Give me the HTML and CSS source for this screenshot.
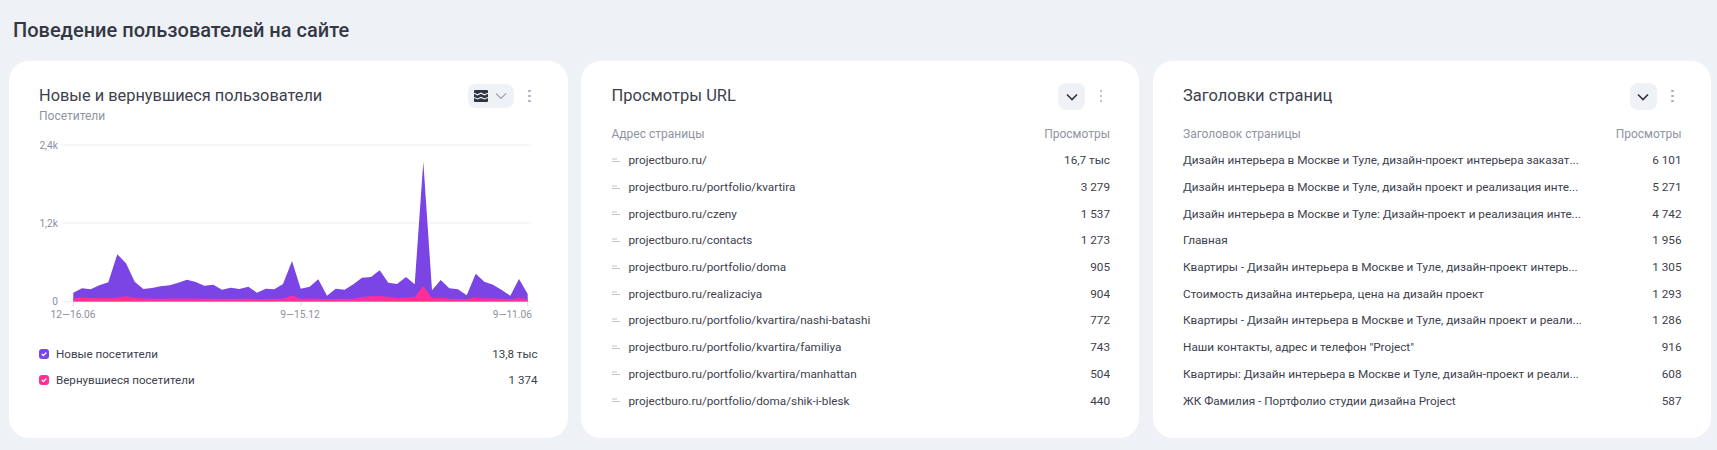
FILE: index.html
```html
<!DOCTYPE html>
<html lang="ru">
<head>
<meta charset="utf-8">
<title>Поведение пользователей на сайте</title>
<link rel="stylesheet" href="styles.css">
</head>
<body>
<h1 class="page-title">Поведение пользователей на сайте</h1>
<div class="cards">
  <section class="card card-chart">
    <header class="card-head">
      <div class="head-text">
        <h2 class="card-title card-title-long">Новые и вернувшиеся пользователи</h2>
        <div class="card-sub">Посетители</div>
      </div>
      <div class="pill">
        <svg class="stack-ico" viewBox="0 0 14 12"><rect width="14" height="12" rx="1"/><path d="M0 3.200l3.500 1.600 3.500-1.600 3.500 1.600 3.500-1.600M0 7.400l3.500 1.600 3.500-1.600 3.500 1.600 3.500-1.600"/></svg>
        <svg class="chev chev-muted" viewBox="0 0 12 8"><path d="M1 1.500l5 5 5-5"/></svg>
      </div>
      <div class="kebab"><i></i><i></i><i></i></div>
    </header>
    <svg class="chart" viewBox="38 130 510 190">
      <line class="grid" x1="62" y1="145" x2="532" y2="145"/>
      <line class="grid" x1="62" y1="223" x2="532" y2="223"/>
      <line class="grid" x1="62" y1="301.500" x2="532" y2="301.500"/>
      <text class="axis" x="58" y="149" text-anchor="end">2,4k</text>
      <text class="axis" x="58" y="227" text-anchor="end">1,2k</text>
      <text class="axis" x="58" y="305" text-anchor="end">0</text>
      <polygon class="area-new" points="73.300,301.500 73.300,292.700 82,288.300 90.700,289.300 99.300,285.300 108.300,282.300 117.300,254.300 126,263.300 134.700,281.700 143.300,289 152,288 160.700,286.300 169.700,285.300 178.300,282.700 187,279.700 195.700,282 204.300,285.700 213.300,284.700 222,289.700 230.700,287.700 239.300,289 248.300,286.700 257,292.700 265.700,288.700 274.300,289.300 283,284 292,261 300.700,288.700 309.700,286.700 318.300,279.300 327,295.700 335.700,288.700 344.700,289.700 353.300,284.300 362,277.700 371,277 379.700,270.300 388.300,282.700 397,284 406,277 414.700,284.300 423.300,161.700 432,290.300 440.700,280 449.300,288.300 458,289.300 466.700,295.300 475.700,273.700 484.300,281.700 493,284.700 501.700,290 510.300,295.700 519,279 527.700,294 527.700,301.500"/>
      <polygon class="area-back" points="73.300,301.200 73.300,298 82,297.400 90.700,298 99.300,298.200 108.300,298.200 117.300,297.400 126,296.200 134.700,298 143.300,298.400 152,298.400 160.700,299 169.700,298.400 178.300,298.400 187,298.400 195.700,298.400 204.300,298.700 213.300,298.700 222,299 230.700,298.700 239.300,299 248.300,298.400 257,299.200 265.700,299 274.300,299 283,298.400 292,295.500 300.700,298.700 309.700,298.400 318.300,298.700 327,299.200 335.700,299 344.700,298.700 353.300,298.700 362,297 371,296.300 379.700,296 388.300,296.800 397,298 406,297.500 414.700,297 423.300,286 432,298.200 440.700,298 449.300,298.700 458,299 466.700,299 475.700,297.600 484.300,298.400 493,298.400 501.700,298.700 510.300,299.200 519,298 527.700,299 527.700,301.200"/>
      <line class="tick" x1="73.300" y1="302" x2="73.300" y2="306"/>
      <line class="tick" x1="301" y1="302" x2="301" y2="306"/>
      <line class="tick" x1="527.700" y1="302" x2="527.700" y2="306"/>
      <text class="axis" x="73" y="318" text-anchor="middle">12—16.06</text>
      <text class="axis" x="300" y="318" text-anchor="middle">9—15.12</text>
      <text class="axis" x="532" y="318" text-anchor="end">9—11.06</text>
    </svg>
    <ul class="legend">
      <li class="legend-row">
        <svg class="check check-new" viewBox="0 0 10 10"><rect width="10" height="10" rx="3"/><path d="M2.800 5l1.600 1.700 2.900-3.200"/></svg>
        <span class="legend-name">Новые посетители</span>
        <span class="legend-val">13,8 тыс</span>
      </li>
      <li class="legend-row">
        <svg class="check check-back" viewBox="0 0 10 10"><rect width="10" height="10" rx="3"/><path d="M2.800 5l1.600 1.700 2.900-3.200"/></svg>
        <span class="legend-name">Вернувшиеся посетители</span>
        <span class="legend-val">1 374</span>
      </li>
    </ul>
  </section>

  <section class="card">
    <header class="card-head">
      <div class="head-text"><h2 class="card-title">Просмотры URL</h2></div>
      <div class="square"><svg class="chev" viewBox="0 0 12 8"><path d="M1 1.500l5 5 5-5"/></svg></div>
      <div class="kebab"><i></i><i></i><i></i></div>
    </header>
    <div class="table-head"><span>Адрес страницы</span><span>Просмотры</span></div>
    <ul class="rows">
      <li class="row"><svg class="link" viewBox="0 0 10 5"><path d="M0 1h5M0 3.500h8"/></svg><span class="cell-name">projectburo.ru/</span><span class="cell-val">16,7 тыс</span></li>
      <li class="row"><svg class="link" viewBox="0 0 10 5"><path d="M0 1h5M0 3.500h8"/></svg><span class="cell-name">projectburo.ru/portfolio/kvartira</span><span class="cell-val">3 279</span></li>
      <li class="row"><svg class="link" viewBox="0 0 10 5"><path d="M0 1h5M0 3.500h8"/></svg><span class="cell-name">projectburo.ru/czeny</span><span class="cell-val">1 537</span></li>
      <li class="row"><svg class="link" viewBox="0 0 10 5"><path d="M0 1h5M0 3.500h8"/></svg><span class="cell-name">projectburo.ru/contacts</span><span class="cell-val">1 273</span></li>
      <li class="row"><svg class="link" viewBox="0 0 10 5"><path d="M0 1h5M0 3.500h8"/></svg><span class="cell-name">projectburo.ru/portfolio/doma</span><span class="cell-val">905</span></li>
      <li class="row"><svg class="link" viewBox="0 0 10 5"><path d="M0 1h5M0 3.500h8"/></svg><span class="cell-name">projectburo.ru/realizaciya</span><span class="cell-val">904</span></li>
      <li class="row"><svg class="link" viewBox="0 0 10 5"><path d="M0 1h5M0 3.500h8"/></svg><span class="cell-name">projectburo.ru/portfolio/kvartira/nashi-batashi</span><span class="cell-val">772</span></li>
      <li class="row"><svg class="link" viewBox="0 0 10 5"><path d="M0 1h5M0 3.500h8"/></svg><span class="cell-name">projectburo.ru/portfolio/kvartira/familiya</span><span class="cell-val">743</span></li>
      <li class="row"><svg class="link" viewBox="0 0 10 5"><path d="M0 1h5M0 3.500h8"/></svg><span class="cell-name">projectburo.ru/portfolio/kvartira/manhattan</span><span class="cell-val">504</span></li>
      <li class="row"><svg class="link" viewBox="0 0 10 5"><path d="M0 1h5M0 3.500h8"/></svg><span class="cell-name">projectburo.ru/portfolio/doma/shik-i-blesk</span><span class="cell-val">440</span></li>
    </ul>
  </section>

  <section class="card">
    <header class="card-head">
      <div class="head-text"><h2 class="card-title">Заголовки страниц</h2></div>
      <div class="square"><svg class="chev" viewBox="0 0 12 8"><path d="M1 1.500l5 5 5-5"/></svg></div>
      <div class="kebab"><i></i><i></i><i></i></div>
    </header>
    <div class="table-head"><span>Заголовок страницы</span><span>Просмотры</span></div>
    <ul class="rows">
      <li class="row"><span class="cell-title">Дизайн интерьера в Москве и Туле, дизайн-проект интерьера заказат...</span><span class="cell-val">6 101</span></li>
      <li class="row"><span class="cell-title">Дизайн интерьера в Москве и Туле, дизайн проект и реализация инте...</span><span class="cell-val">5 271</span></li>
      <li class="row"><span class="cell-title">Дизайн интерьера в Москве и Туле: Дизайн-проект и реализация инте...</span><span class="cell-val">4 742</span></li>
      <li class="row"><span class="cell-title">Главная</span><span class="cell-val">1 956</span></li>
      <li class="row"><span class="cell-title">Квартиры - Дизайн интерьера в Москве и Туле, дизайн-проект интерь...</span><span class="cell-val">1 305</span></li>
      <li class="row"><span class="cell-title">Стоимость дизайна интерьера, цена на дизайн проект</span><span class="cell-val">1 293</span></li>
      <li class="row"><span class="cell-title">Квартиры - Дизайн интерьера в Москве и Туле, дизайн проект и реали...</span><span class="cell-val">1 286</span></li>
      <li class="row"><span class="cell-title">Наши контакты, адрес и телефон "Project"</span><span class="cell-val">916</span></li>
      <li class="row"><span class="cell-title">Квартиры: Дизайн интерьера в Москве и Туле, дизайн-проект и реали...</span><span class="cell-val">608</span></li>
      <li class="row"><span class="cell-title">ЖК Фамилия - Портфолио студии дизайна Project</span><span class="cell-val">587</span></li>
    </ul>
  </section>
</div>
</body>
</html>
```
FILE: styles.css
```css
* { box-sizing: border-box; }
html, body { margin: 0; padding: 0; }
body {
  width: 1717px;
  height: 450px;
  overflow: hidden;
  background: #eef1f6;
  font-family: "Roboto", "Liberation Sans", sans-serif;
  color: #3d414d;
  padding: 0 6px 0 8.500px;
}
.page-title {
  margin: 0;
  padding: 18px 0 0 4.500px;
  height: 61px;
  font-size: 20px;
  line-height: 24px;
  font-weight: 500;
  color: #343844;
}
.cards {
  display: grid;
  grid-template-columns: 559px 558px 558px;
  column-gap: 13.500px;
}
.card {
  height: 377px;
  background: #fff;
  border-radius: 20px;
  padding: 24px 29px 0 30.500px;
}
.card-head {
  display: flex;
  align-items: flex-start;
  height: 37px;
}
.head-text { flex: 1; }
.card-title {
  margin: 0;
  font-size: 16.500px;
  line-height: 21px;
  font-weight: 400;
  color: #3d414d;
}
.card-title-long { font-size: 16.350px; }
.card-sub {
  font-size: 12px;
  line-height: 15px;
  margin-top: 3px;
  color: #8f94a3;
}
.pill {
  display: flex;
  align-items: center;
  justify-content: space-between;
  width: 46px;
  height: 24px;
  margin-top: -1px;
  background: #eef1f6;
  border-radius: 8px;
  padding: 0 7px 0 6px;
}
.stack-ico { width: 14px; height: 12px; }
.stack-ico rect { fill: #2f3441; }
.stack-ico path { fill: none; stroke: #eef1f6; stroke-width: 1.100; }
.chev { width: 12px; height: 8px; fill: none; stroke: #2f3441; stroke-width: 1.600; }
.chev-muted { stroke: #9ea4b3; stroke-width: 1.200; }
.square {
  display: flex;
  align-items: center;
  justify-content: center;
  width: 27px;
  height: 27px;
  margin-top: -2px;
  background: #eef1f6;
  border-radius: 8px;
}
.kebab {
  display: flex;
  flex-direction: column;
  justify-content: center;
  gap: 2.500px;
  align-items: center;
  width: 4px;
  height: 22px;
  margin: 0 7px 0 14px;
}
.kebab i { width: 2.500px; height: 2.500px; border-radius: 50%; background: #a8aec0; }
.chart {
  display: block;
  width: 510px;
  height: 190px;
  margin: 8px 0 0 -1px;
}
.grid { stroke: #eeeff4; stroke-width: 1; }
.tick { stroke: #d8dbe3; stroke-width: 1; }
.axis { font-size: 10.200px; fill: #8b909f; }
.area-new { fill: #7a45e4; }
.area-back { fill: #ff2f96; }
.legend { list-style: none; margin: 21px 0 0; padding: 0 1px 0 0; }
.legend-row {
  display: flex;
  align-items: center;
  height: 26px;
  font-size: 11.600px;
}
.check { width: 10px; height: 10px; flex: none; margin-right: 7px; }
.check path { fill: none; stroke: #fff; stroke-width: 1.200; }
.check-new rect { fill: #7a45e4; }
.check-back rect { fill: #ff2f96; }
.legend-name { flex: 1; }
.legend-val { text-align: right; }
.table-head {
  display: flex;
  justify-content: space-between;
  height: 20px;
  margin-top: 5px;
  font-size: 12px;
  line-height: 15px;
  color: #8f94a3;
}
.rows { list-style: none; margin: 0; padding: 0; }
.row {
  display: flex;
  align-items: center;
  height: 26.700px;
  font-size: 11.750px;
}
.link { width: 10px; height: 5px; flex: none; margin-right: 7px; fill: none; stroke: #bfc3cd; stroke-width: 1; }
.cell-name { flex: 1; white-space: nowrap; }
.cell-title {
  flex: 1;
  white-space: nowrap;
}
.cell-val { text-align: right; }
```
